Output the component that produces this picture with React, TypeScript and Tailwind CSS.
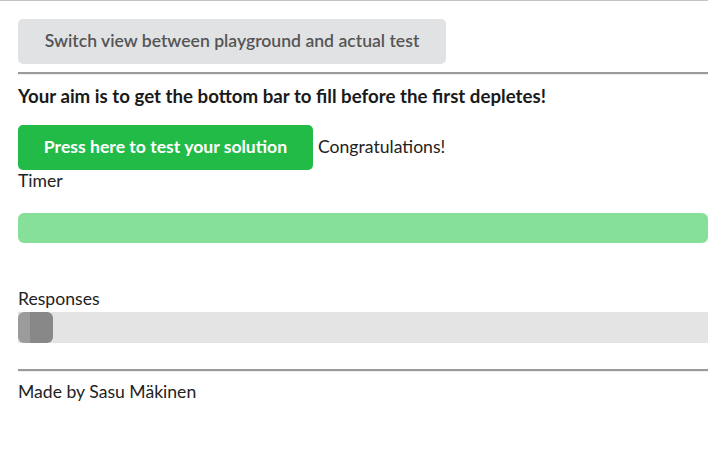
const App = () => {
  return (
    <div
      className="min-h-[472px] w-[708px] overflow-hidden border-t border-[#c4c4c4] bg-white text-[17.6px] text-[#222]"
      style={{ fontFamily: "Lato, 'Open Sans', sans-serif" }}
    >
      <div className="pl-[18px]">
        {/* Switch view */}
        <button className="mt-[18px] h-[45px] w-[428px] rounded-[5px] bg-[#e1e2e4] text-[17.6px] font-semibold text-[#555]">
          Switch view between playground and actual test
        </button>

        <hr className="mt-[8px] border-t-2 border-[#9a9a9a] border-b border-b-[#eee]" />

        <h3 className="mt-[10px] text-[18.7px] font-bold leading-[22px] text-[#1a1a1a]">
          Your aim is to get the bottom bar to fill before the first depletes!
        </h3>

        {/* Test button */}
        <div className="mt-[18px] flex items-center">
          <button className="h-[45px] w-[295px] rounded-[5px] bg-[#22bb47] text-[17.6px] font-bold text-white">
            Press here to test your solution
          </button>
          <span className="ml-[5px]">Congratulations!</span>
        </div>

        <div className="leading-[22px]">Timer</div>

        {/* Timer bar */}
        <div className="mt-[21px] h-[30px] w-[690px] rounded-[6px] bg-[#86e09a]" />

        <div className="mt-[45px] leading-[22px]">Responses</div>

        {/* Responses bar */}
        <div className="mt-[2px] flex h-[31px] w-[720px] bg-[#e4e4e4]">
          <div className="flex h-full w-[35px] overflow-hidden rounded-[6px]">
            <div className="h-full w-[12px] bg-[#9c9c9c]" />
            <div className="h-full flex-1 bg-[#888]" />
          </div>
        </div>

        <hr className="mt-[26px] border-t-2 border-[#9a9a9a] border-b border-b-[#eee]" />

        <div className="mt-[9px] leading-[22px]">Made by Sasu Mäkinen</div>
      </div>
    </div>
  );
};

export default App;
